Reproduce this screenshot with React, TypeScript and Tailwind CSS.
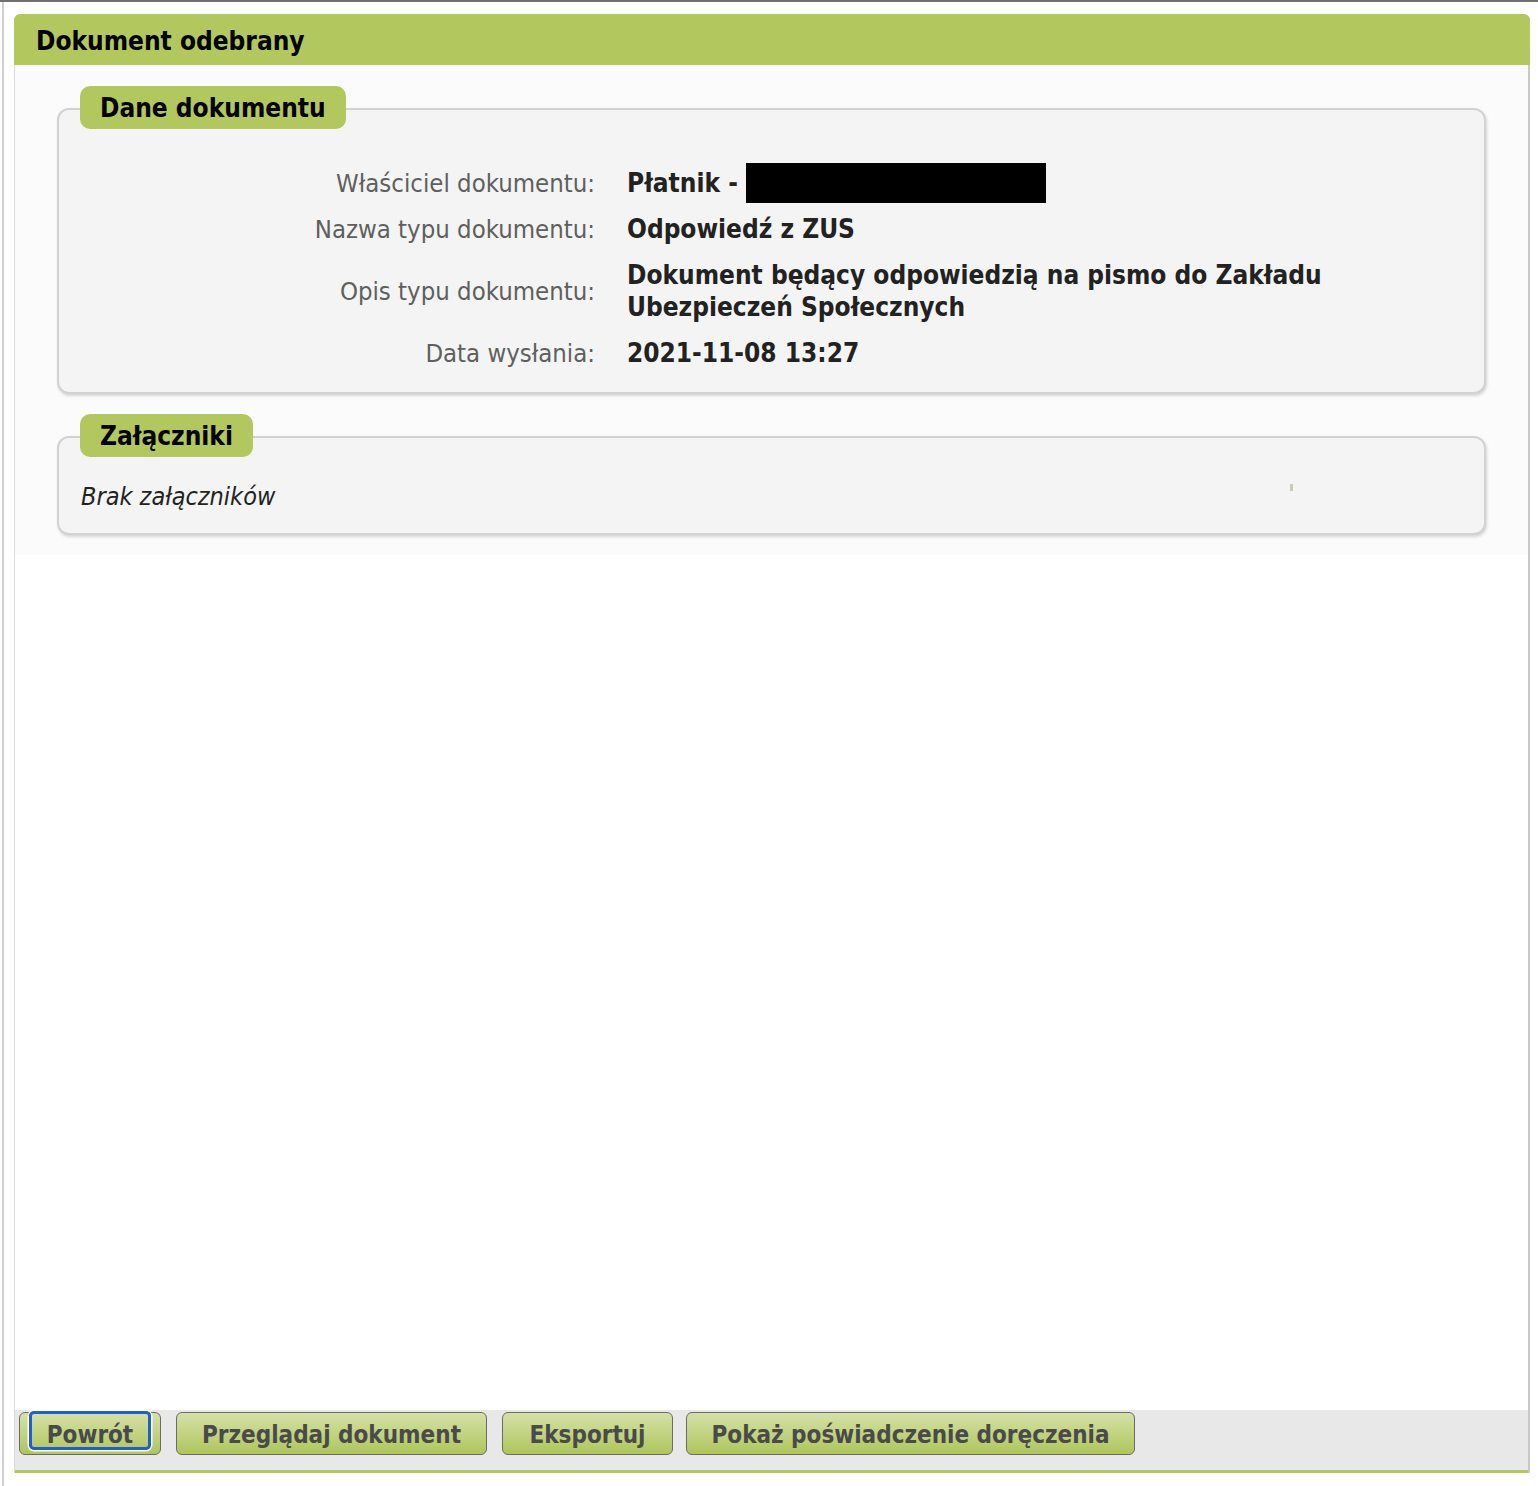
import React from "react";

const FONT = { fontFamily: '"DejaVu Sans Condensed", "DejaVu Sans", Verdana, sans-serif' };

function Legend({ children }: { children: React.ReactNode }) {
  return (
    <div className="relative z-10 ml-[23px] flex h-[43px] w-fit items-center rounded-[10px] bg-[#b2c85e] px-[20px] text-[26px] font-bold leading-none text-black">
      {children}
    </div>
  );
}

function Row({ label, children }: { label: string; children: React.ReactNode }) {
  return (
    <div className="grid grid-cols-[536px_1fr] items-center gap-x-[32px]">
      <div className="text-right text-[25.5px] leading-[32px] text-[#5f5f5f]">{label}</div>
      <div className="text-[26px] font-bold leading-[32px] text-[#222]">{children}</div>
    </div>
  );
}

function Btn({ children, w, focus, ml }: { children: React.ReactNode; w: string; focus?: boolean; ml: string }) {
  return (
    <button
      className={`relative flex h-[43px] ${w} ${ml} items-center justify-center rounded-[6px] border-[1.5px] border-[#6b6b6b] bg-gradient-to-b from-[#d6e1a6] to-[#aec65a] pt-[3px] text-[24px] font-bold leading-none text-[#4a4a4a]`}
      style={FONT}
    >
      {focus && (
        <span className="absolute left-[9px] right-[9px] top-[-2px] bottom-[4px] rounded-[5px] border-[3px] border-[#1f5fd0] shadow-[0_0_0_1.5px_#ffffff]" />
      )}
      <span className="relative">{children}</span>
    </button>
  );
}

export default function App() {
  return (
    <div className="h-[1486px] w-full border-t-2 border-[#707070] bg-white" style={FONT}>
      <div className="flex h-full">
        <div className="ml-[2px] h-full w-[2px] bg-[#d0d0d0]" />
        <div className="ml-[10px] mt-[12px] flex h-[1459px] w-[1516px] flex-col">
          <div className="flex h-[51px] items-center rounded-t-[6px] bg-[#b2c85e] pl-[22px] pt-[3px] text-[26px] font-bold text-black">
            Dokument odebrany
          </div>
          <div className="flex flex-1 flex-col border-l border-r-2 border-l-[#dcdcdc] border-r-[#c8c8c8] bg-white">
            <div className="bg-[#fbfbfb] px-[42px] pb-[20px] pt-[21px]">
              <Legend>Dane dokumentu</Legend>
              <div className="-mt-[21px] flex flex-col gap-[14px] rounded-[12px] border-2 border-[#d2d2d2] bg-[#f4f4f4] pb-[23px] pt-[57px] shadow-[1px_2px_3px_rgba(0,0,0,0.15)]">
                <Row label="Właściciel dokumentu:">
                  <span className="flex h-[32px] items-center">
                    <span className="w-[119px] shrink-0 whitespace-nowrap">Płatnik -</span>
                    <span className="-my-[4px] inline-block h-[40px] w-[300px] shrink-0 bg-black" />
                  </span>
                </Row>
                <Row label="Nazwa typu dokumentu:">Odpowiedź z ZUS</Row>
                <Row label="Opis typu dokumentu:">
                  Dokument będący odpowiedzią na pismo do Zakładu
                  <br />
                  Ubezpieczeń Społecznych
                </Row>
                <Row label="Data wysłania:">2021-11-08 13:27</Row>
              </div>

              <div className="mt-[20px]">
                <Legend>Załączniki</Legend>
                <div className="relative -mt-[21px] rounded-[12px] border-2 border-[#d2d2d2] bg-[#f4f4f4] pb-[20px] pl-[22px] pt-[43px] shadow-[1px_2px_3px_rgba(0,0,0,0.15)]">
                  <div className="text-[25px] italic leading-[32px] text-[#222]">Brak załączników</div>
                  <span className="absolute left-[1231px] top-[46px] h-[7px] w-[3px] bg-[#c9cbb8]" />
                </div>
              </div>
            </div>
            <div className="flex-1" />

            <div className="flex h-[63px] items-start border-b-[3px] border-[#b2c85e] bg-[#e8e8e8] pl-[4px] pt-[2px]">
              <Btn w="w-[142px]" ml="ml-0" focus>
                Powrót
              </Btn>
              <Btn w="w-[311px]" ml="ml-[15px]">Przeglądaj dokument</Btn>
              <Btn w="w-[171px]" ml="ml-[15px]">Eksportuj</Btn>
              <Btn w="w-[449px]" ml="ml-[13px]">Pokaż poświadczenie doręczenia</Btn>
            </div>
          </div>
        </div>
      </div>
    </div>
  );
}
